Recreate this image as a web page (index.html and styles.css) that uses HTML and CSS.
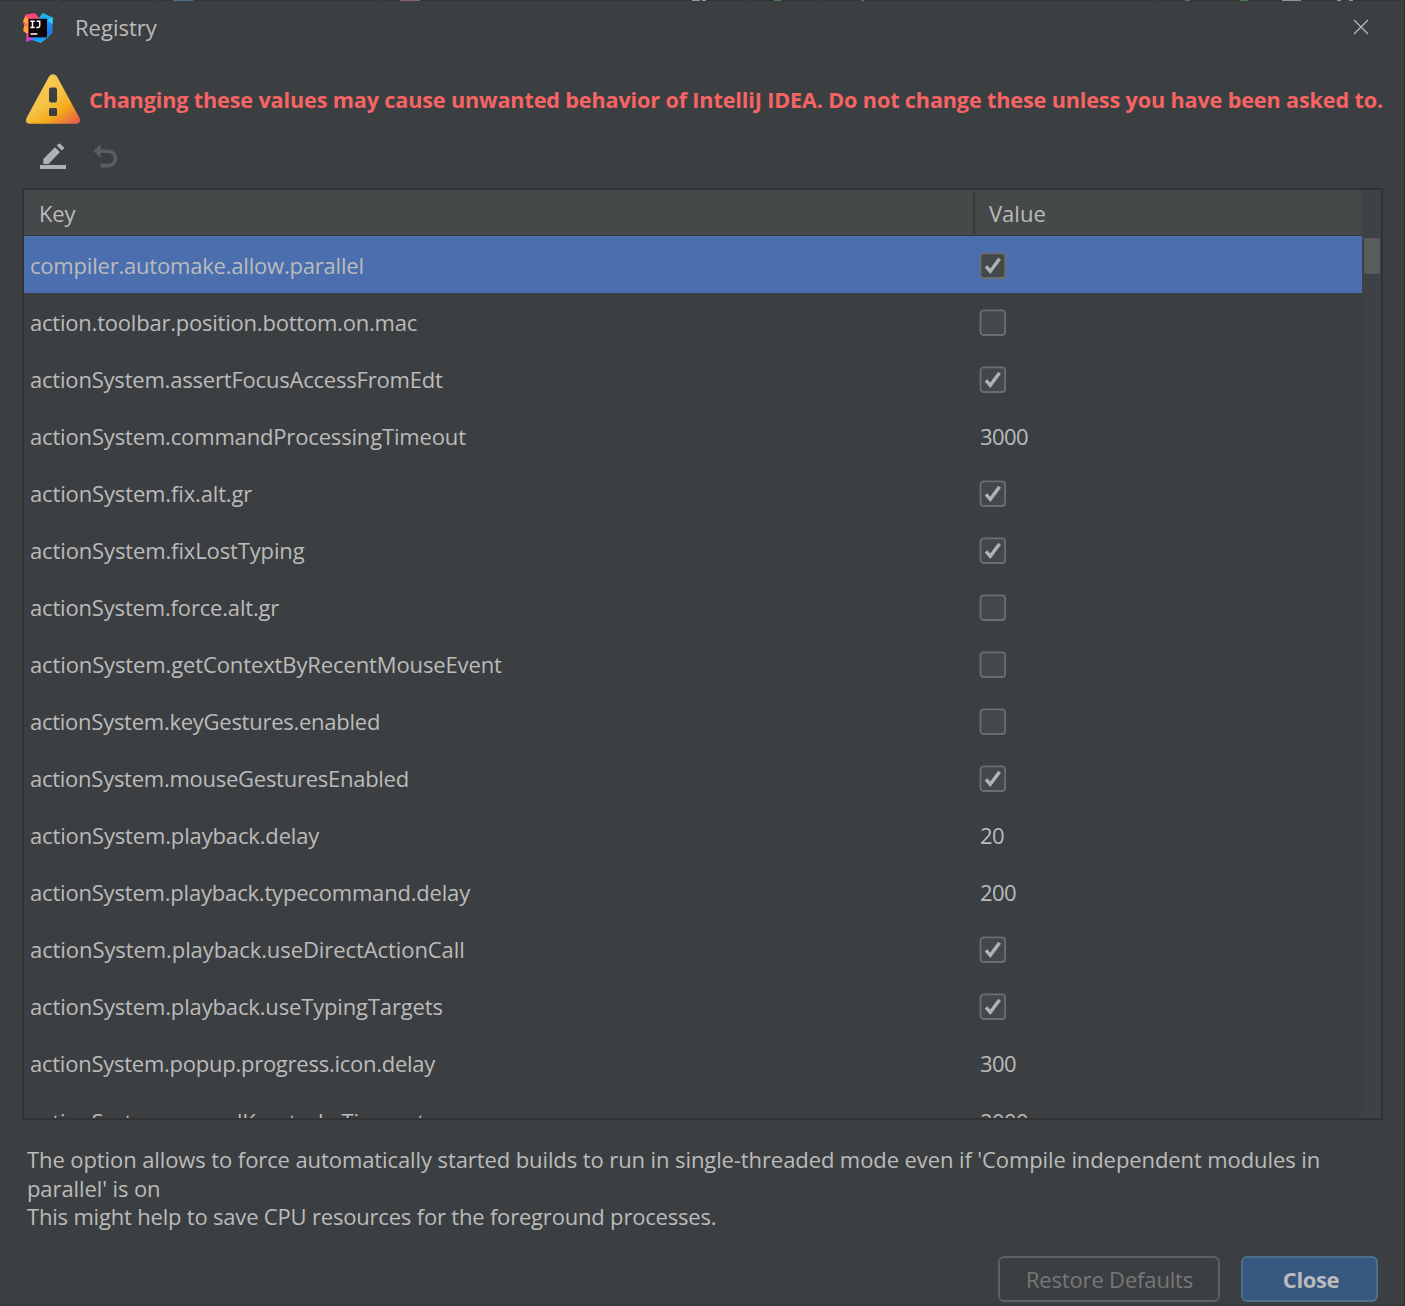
FILE: index.html
```html
<!DOCTYPE html>
<html lang="en">
<head>
<meta charset="utf-8">
<title>Registry</title>
<link rel="stylesheet" href="styles.css">
</head>
<body>
<div class="dialog">
  <svg class="backdrop" width="1405" height="1" viewBox="0 0 1405 1">
    <path fill="#323537" d="M0 0h1405v1H0z"/>
    <path fill="#4a7083" d="M173 0h20v1h-20z"/>
    <path fill="#8d6169" d="M400 0h20v1h-20z"/>
    <path fill="#909496" d="M692 0h8v1h-8zM702 0h4v1h-4zM1282 0h19v1h-19zM1337 0h4v1h-4zM1349 0h4v1h-4z"/>
    <path fill="#4b7f50" d="M774 0h7v1h-7zM861 0h3v1h-3zM1185 0h5v1h-5zM1240 0h8v1h-8z"/>
    <path fill="#55585a" d="M57 0h1v1h-1zM155 0h1v1h-1zM380 0h1v1h-1zM749 0h1v1h-1zM819 0h1v1h-1zM1156 0h1v1h-1z"/>
  </svg>
  <header class="titlebar">
    <svg class="logo" width="32" height="32" viewBox="0 0 32 32">
      <defs>
        <linearGradient id="lgPink" x1="0" y1="0" x2="0" y2="1"><stop offset="0" stop-color="#f5407a"/><stop offset=".3" stop-color="#fb5a6c"/><stop offset=".5" stop-color="#fd8a3e"/><stop offset=".68" stop-color="#fe4f6a"/><stop offset="1" stop-color="#e83bb0"/></linearGradient>
        <linearGradient id="lgBlue" x1="0" y1="0" x2="0" y2="1"><stop offset="0" stop-color="#22c3f5"/><stop offset=".35" stop-color="#1f8bef"/><stop offset=".7" stop-color="#1a78ee"/><stop offset="1" stop-color="#12b4f8"/></linearGradient>
      </defs>
      <path fill="url(#lgBlue)" d="M16 7.500L20.700 1l10 4.500-.4 15.500-11.300 10L10 28V7z"/>
      <path fill="#2fd0f6" d="M25 8l5.700-2.500-.2 7zM25 25l5.300-4-11.300 10z"/>
      <path fill="url(#lgPink)" d="M3.500 2.500L13 1l5 6v3H7v16l-3 4 .5-8L1.300 19l1-6L1 10z"/>
      <path fill="#fda43c" d="M1 9l3-5 2.500 4v5zM2 14l4.500 1v7L1.500 19z"/>
      <path fill="#b548d4" d="M3.800 30l2.700-6h6.500l-3 4z"/>
      <path fill="#120508" d="M6.500 6.800H25v18.500H6.500z"/>
      <path stroke="#fff" stroke-width="1.500" fill="none" d="M8.300 9.300h4.400M10.500 9.300v6.200M8.300 15.500h4.400M14.500 9.300h3.200v4.500q0 1.700-1.700 1.700h-1.800M8.500 22h6.800"/>
    </svg>
    <h1 class="title">Registry</h1>
    <svg class="close-x" width="16" height="16" viewBox="0 0 16 16"><path d="M1 1l14 14M15 1L1 15" stroke="#b4b6b7" stroke-width="1.4" fill="none"/></svg>
  </header>
  <div class="warning">
    <svg class="warn-icon" width="56" height="50" viewBox="0 0 56 50">
      <defs><linearGradient id="warn" x1=".2" y1=".1" x2=".9" y2="1"><stop offset="0" stop-color="#f7cb58"/><stop offset=".42" stop-color="#f5c345"/><stop offset=".68" stop-color="#f3ab1c"/><stop offset="1" stop-color="#e85f4b"/></linearGradient></defs>
      <path fill="url(#warn)" fill-rule="evenodd" d="M24 2.600Q28-2 32 2.600L54.500 44Q56.500 49.500 51 49.700H5Q-.5 49.500 1.500 44zM26 13.500q-2 0-2 2v11q0 2 2 2h4q2 0 2-2v-11q0-2-2-2zM25.500 34q-1.500 0-1.500 1.500v5q0 1.500 1.500 1.500h5q1.500 0 1.500-1.500v-5q0-1.500-1.500-1.500z"/>
    </svg>
    <strong class="warn-text">Changing these values may cause unwanted behavior of IntelliJ IDEA. Do not change these unless you have been asked to.</strong>
  </div>
  <div class="toolbar">
    <svg width="28" height="28" viewBox="0 0 28 28" fill="#afb1b3"><path d="M1 23h26v4H1zM4.300 17L16 5.300l5 4.700-11.500 12H4.300zM17.700 3.500L19.300 1.900q1-.9 2 0L24.600 5q.9 1 0 2L22.900 8.500z"/></svg>
    <svg width="28" height="28" viewBox="0 0 28 28"><path fill="#5b5d5f" d="M1.300 9L8.700 2v14z"/><path d="M8 9.200h8.300a7.200 7.200 0 0 1 0 14.400H8.700" fill="none" stroke="#5b5d5f" stroke-width="3.600"/></svg>
  </div>
  <div class="table">
    <div class="grid">
      <div class="head"><span class="head-key">Key</span><span class="head-value">Value</span></div>
      <div class="rows" id="rows"></div>
    </div>
    <div class="scrollbar"><div class="thumb"></div></div>
  </div>
  <div class="description">
    <p class="reason">The option allows to force automatically started builds to run in single-threaded mode even if 'Compile independent modules in<br>parallel' is on</p>
    <p class="benefit">This might help to save CPU resources for the foreground processes.</p>
  </div>
  <footer class="buttons">
    <button class="btn" disabled>Restore Defaults</button>
    <button class="btn btn-primary">Close</button>
  </footer>
</div>
<script src="registry.js"></script>
</body>
</html>
```
FILE: styles.css
```css
* { box-sizing: border-box; }
body { margin: 0; background: #3c3f41; color: #bbbbbb; font: 22px/28px "Open Sans", "Noto Sans", sans-serif; }
.dialog { position: relative; width: 1405px; height: 1306px; overflow: hidden; display: flex; flex-direction: column; border-right: 1px solid #2d2f30; border-bottom: 1px solid #373536; }
.backdrop { position: absolute; left: 0; top: 0; }
.titlebar { display: flex; align-items: center; height: 56px; padding: 0 35px 2px 22px; flex: none; }
.logo { flex: none; margin-top: 2px; }
.title { margin: 0 auto 0 21px; font-size: 22px; font-weight: 400; }
.warning { display: flex; align-items: center; height: 86px; padding-left: 25px; flex: none; }
.warn-icon { flex: none; }
.warn-text { margin-left: 8px; padding-top: 2px; white-space: nowrap; color: #f76464; font-size: 21.6px; font-weight: 700; letter-spacing: -0.132px; }
.toolbar { display: flex; gap: 25px; padding: 0 39px; height: 46px; flex: none; }
.table { display: flex; flex: none; width: 1361px; height: 932px; margin-left: 22px; border: 2px solid #323232; overflow: hidden; }
.grid { width: 1338px; height: 100%; overflow: hidden; }
.head { display: flex; align-items: center; height: 46px; background: #45494a; border-bottom: 1px solid #323638; }
.head-key { width: 951px; height: 42px; line-height: 43px; padding-left: 15px; border-right: 2px solid #35383a; letter-spacing: -0.2px; }
.head-value { height: 42px; line-height: 43px; padding-left: 14px; }
.row { display: flex; align-items: center; height: 57px; padding-left: 6px; }
.row.selected { background: #4b6eaf; }
.row:last-child { padding-top: 2px; }
.key { width: 949px; line-height: 32px; white-space: nowrap; }
.value { padding-left: 1px; letter-spacing: -0.6px; }
.check { display: block; width: 27px; height: 27px; margin: 2px 0 0 -1px; }
.scrollbar { flex: 1; background: #3f4244; padding: 48px 1px 0 2px; }
.thumb { height: 36px; background: #5b5e5f; border: 1px solid #555859; }
.description { padding: 25px 27px 0; height: 136px; flex: none; }
.description p { margin: 0; line-height: 28.5px; white-space: nowrap; }
.reason { letter-spacing: -0.095px; }
.benefit { letter-spacing: -0.19px; }
.buttons { display: flex; justify-content: flex-end; gap: 21px; padding-right: 26px; flex: none; }
.btn { width: 222px; height: 46px; padding: 0 0 0 1px; border: 2px solid #5e6060; border-radius: 6px; background: transparent; color: #777777; font: inherit; letter-spacing: -0.17px; }
.btn-primary { width: 137px; padding-left: 3px; background: #365880; border-color: #4c708c; color: #bbbbbb; font-weight: 700; letter-spacing: -0.4px; }
```
FILE: registry.js
```javascript
// key, value, letter-spacing of the key in px
const entries = [
  ["compiler.automake.allow.parallel", true, -0.2],
  ["action.toolbar.position.bottom.on.mac", false, -0.216],
  ["actionSystem.assertFocusAccessFromEdt", true, -0.2],
  ["actionSystem.commandProcessingTimeout", "3000", -0.16],
  ["actionSystem.fix.alt.gr", true, -0.14],
  ["actionSystem.fixLostTyping", true, -0.13],
  ["actionSystem.force.alt.gr", false, -0.17],
  ["actionSystem.getContextByRecentMouseEvent", false, -0.12],
  ["actionSystem.keyGestures.enabled", false, -0.26],
  ["actionSystem.mouseGesturesEnabled", true, -0.26],
  ["actionSystem.playback.delay", "20", -0.15],
  ["actionSystem.playback.typecommand.delay", "200", -0.19],
  ["actionSystem.playback.useDirectActionCall", true, -0.08],
  ["actionSystem.playback.useTypingTargets", true, -0.15],
  ["actionSystem.popup.progress.icon.delay", "300", -0.25],
  ["actionSystem.secondKeystrokeTimeout", "2000", -0.22]
];
const box = on => `<svg class="check" viewBox="0 0 27 27"><rect x="1.500" y="1.400" width="24.600" height="24.600" rx="3" fill="#43494a" stroke="#6b6d6e" stroke-width="1.800"/>${on ? '<path d="M7 14.300l4.300 5L20.600 6.800" fill="none" stroke="#b0b2b3" stroke-width="3.400"/>' : ""}</svg>`;
document.getElementById("rows").innerHTML = entries.map(([key, value, spacing], i) =>
  `<div class="row${i ? "" : " selected"}"><span class="key" style="letter-spacing:${spacing}px">${key}</span><span class="value">${typeof value === "string" ? value : box(value)}</span></div>`).join("");
```
